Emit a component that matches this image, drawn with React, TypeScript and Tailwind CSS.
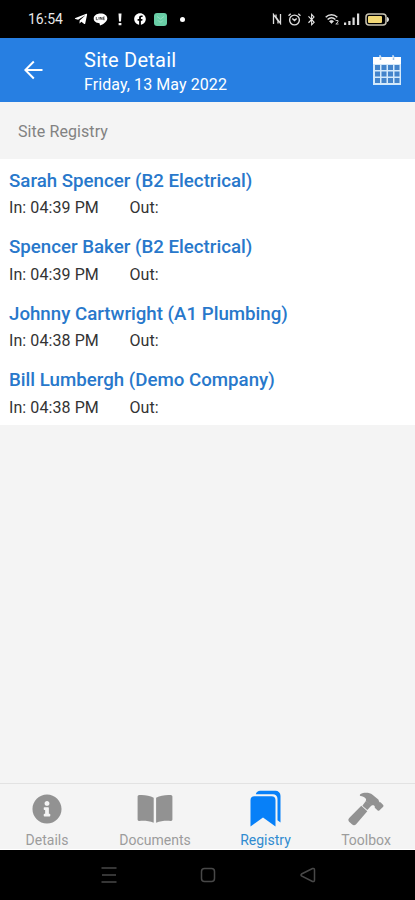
import React from 'react';
import { FaInfoCircle, FaTelegramPlane, FaFacebook, FaBluetoothB } from 'react-icons/fa';

const entries = [
  { name: 'Sarah Spencer (B2 Electrical)', in: '04:39 PM' },
  { name: 'Spencer Baker (B2 Electrical)', in: '04:39 PM' },
  { name: 'Johnny Cartwright (A1 Plumbing)', in: '04:38 PM' },
  { name: 'Bill Lumbergh (Demo Company)', in: '04:38 PM' },
];

const BookIcon = () => (
  <svg width="36" height="30" viewBox="0 0 36 30" fill="currentColor">
    <path d="M.6 2.6C.6 1.600 1.300 1.100 2.200 1 7.500.6 12.600 1.500 16.700 3.800V28.800C12 26.900 7 26.500 2.200 27 1.200 27.100.6 26.500.6 25.600Z" />
    <path d="M35.400 2.600C35.400 1.600 34.700 1.100 33.800 1 28.500.6 23.400 1.500 19.100 3.800V28.800C24 26.900 29 26.500 33.800 27 34.800 27.100 35.400 26.500 35.400 25.600Z" />
  </svg>
);

const BookmarksIcon = () => (
  <svg width="31" height="38" viewBox="0 0 31 38" fill="currentColor">
    <path d="M4.500 6.300H21.500A4 4 0 0 1 25.500 10.300V36.500L13 27.600.5 36.500V10.300A4 4 0 0 1 4.500 6.300Z" />
    <path d="M5.800 4.200C6.300 2 8 .8 10.200.8H25.500A5 5 0 0 1 30.500 5.800V32.500L27.500 30.300V8.700A4.500 4.500 0 0 0 23 4.200Z" />
  </svg>
);

const HammerIcon = () => (
  <svg width="36" height="34" viewBox="0 0 36 34" fill="currentColor">
    <path d="M12.300 2.200C16 .1 21.300.3 24.500 2.700L30.300 7.600C31 8.500 30.700 9.700 31.600 10.200L32.500 10.200 35.200 13C35.600 13.500 35.600 14.200 35.200 14.700L31.300 18.500C30.800 18.900 30.200 18.900 29.700 18.500L26.800 15.700C26.700 14.800 27 14.200 26.300 13.700 25.300 13 24.200 13.500 23.300 13.500L17.800 8.800C19 6.600 16.600 4.600 12.500 3.900 11.700 3.700 11.600 2.600 12.300 2.200Z" />
    <path d="M18 8.800 23.700 13.300 19.300 18.100 14.400 13.700Z" />
    <path d="M13.300 13.700 19.300 19.300 8.100 32.200C7 33.400 5.300 33.500 4.200 32.500L1.100 29.700C.1 28.700.1 27.200 1.200 26.100Z" />
  </svg>
);

const CalendarIcon = () => (
  <svg width="30" height="32" viewBox="0 0 30 32">
    <path d="M1 3H29V31H1Z" fill="#d3e9fb" />
    <path d="M1 3H29V10H1Z" fill="#fff" />
    <g fill="#4384cb">
      {[11, 17.5, 24].map((y) =>
        [3, 9.5, 16, 22.5].map((x) => <rect key={`${x}-${y}`} x={x} y={y} width="5" height="5" />)
      )}
    </g>
    <path d="M8.500 2V6M21.500 2V6" stroke="#9cbfe2" strokeWidth="1.500" />
    <path d="M8 1V4M21 1V4" stroke="#fff" strokeWidth="1" />
  </svg>
);

const tabs = [
  { label: 'Details', icon: <FaInfoCircle size={30} />, width: 'w-[94px]' },
  { label: 'Documents', icon: <BookIcon />, width: 'w-[122px]' },
  { label: 'Registry', icon: <BookmarksIcon />, width: 'w-[99px]', active: true },
  { label: 'Toolbox', icon: <HammerIcon />, width: 'w-[102px]' },
];

const StatusBar = () => (
  <div className="flex h-[38px] items-center bg-black pl-7 pr-[25px] text-[#e8e8e8]">
    <span className="w-[46px] whitespace-nowrap text-[14px] leading-5">16:54</span>
    <FaTelegramPlane size={14} className="text-white" />
    <svg width="15" height="13" viewBox="0 0 15 13" className="ml-[5px]">
      <path d="M7.500.5C3.500.5.7 2.700.7 5.500S3.300 10 6.500 10.300L7 12.500C10 11.500 14.300 8.500 14.300 5.500S11.500.5 7.500.5Z" fill="#fff" />
      <path d="M3.300 4V6.700H4.800M6 4V6.700M7.300 6.700V4L9 6.700V4M11.700 4H10.300V6.700H11.700M10.300 5.400H11.500" stroke="#222" strokeWidth=".7" fill="none" />
    </svg>
    <svg width="4" height="13" viewBox="0 0 4 13" className="ml-[10px]">
      <path d="M.5.500H3.500L3 8.500H1ZM.6 10H3.400V12.300H.6Z" fill="#f5f5f5" />
    </svg>
    <FaFacebook size={12} className="ml-3 text-white" />
    <div className="ml-2 flex h-[13px] w-[13px] items-center justify-center rounded-[3px] bg-[#68cda5]">
      <svg width="9" height="9" viewBox="0 0 9 9" fill="none" stroke="#a0e2c9" strokeWidth=".8">
        <path d="M1 1.500 4.500 4 8 1.500M2 5.500C3.500 7.500 5.500 7.500 7 5.500" />
      </svg>
    </div>
    <div className="ml-[13px] h-[5px] w-[5px] rounded-full bg-white" />
    <div className="ml-auto flex items-center">
      <svg width="10" height="12" viewBox="0 0 10 12" fill="none" stroke="#ddd" strokeWidth="1.300">
        <path d="M1.500 11V1.500L6 8V10.500M4 1.500V4L8.500 10.500V1" />
      </svg>
      <svg width="13" height="13" viewBox="0 0 12 12" fill="none" stroke="#ddd" strokeWidth="1.300" className="ml-[6px]">
        <circle cx="6" cy="6.500" r="4.500" />
        <path d="M.5 2.500 2.500.7M11.500 2.500 9.500.7M4 5 6 7 8 5" />
      </svg>
      <FaBluetoothB size={13} className="ml-1" />
      <svg width="15" height="12" viewBox="0 0 15 12" className="ml-[7px]" fill="none" stroke="#ddd">
        <path d="M.7 4.300C4 1 9 1 12.300 4.300M2.600 6.500C5 4.300 8 4.300 10.400 6.500" strokeWidth="1.500" />
        <path d="M4.300 8.300C5.800 7 7.200 7 8.700 8.300L6.500 10.500Z" fill="#ddd" strokeWidth=".5" />
        <path d="M10.500 7.500H13V9L10.800 11H13.500" strokeWidth=".9" />
      </svg>
      <svg width="16" height="12" viewBox="0 0 16 12" fill="#ddd" className="ml-[4px]">
        <path d="M0 9.500H2.200V12H0ZM4.300 8H6.500V12H4.300ZM8.500 4.500H10.700V12H8.500ZM13 .5H15.200V12H13Z" />
      </svg>
      <svg width="25" height="13" viewBox="0 0 25 13" className="ml-[5px]">
        <rect x="1" y="1" width="20" height="11" rx="3" fill="none" stroke="#c9c4b4" strokeWidth="1.500" />
        <rect x="3" y="3" width="14" height="7" rx="1" fill="#f3d976" />
        <path d="M22 4C24.700 4.500 24.700 8.500 22 9" fill="#ddd" />
      </svg>
    </div>
  </div>
);

const App = () => {
  return (
    <div className="flex h-[900px] w-full flex-col overflow-hidden bg-[#f4f4f4] font-['Roboto',sans-serif]">
      <StatusBar />
      <header className="flex h-16 items-center bg-[#277fe2] pl-6 pr-[13px] text-white">
        <svg width="19" height="20" viewBox="0 0 19 20" fill="none" stroke="currentColor" strokeWidth="2">
          <path d="M18.500 10H1.500M9.800 1.500 1.300 10 9.800 18.500" />
        </svg>
        <div className="ml-[41px] flex flex-col pt-1">
          <h1 className="text-[20px] leading-[25px] tracking-[0.25px]">Site Detail</h1>
          <p className="text-[16px] leading-[23px] tracking-[0.08px]">Friday, 13 May 2022</p>
        </div>
        <div className="ml-auto">
          <CalendarIcon />
        </div>
      </header>
      <div className="h-[57px] px-[18px] pt-5 text-[16px] leading-5 tracking-[0.08px] text-[#828282]">Site Registry</div>
      <main className="h-[266px] bg-white">
        {entries.map((entry) => (
          <div key={entry.name} className="h-[66.5px] px-[9px] pt-[9.5px]">
            <h2 className="whitespace-nowrap text-[18.7px] font-medium leading-6 text-[#2878cb]">{entry.name}</h2>
            <div className="flex pt-[4.5px] text-[16px] leading-[22px] tracking-[0.08px] text-[#333]">
              <span className="w-[120.5px]">In: {entry.in}</span>
              <span>Out:</span>
            </div>
          </div>
        ))}
      </main>
      <nav className="mt-auto flex h-[67px] shrink-0 border-b border-t border-b-[#fff] border-t-[#e2e2e2]">
        {tabs.map((tab) => (
          <div
            key={tab.label}
            className={`${tab.width} flex shrink-0 flex-col items-center ${tab.active ? 'text-[#0780f8]' : 'text-[#929292]'}`}
          >
            <div className="flex h-[47px] items-center justify-center pt-[3px]">{tab.icon}</div>
            <span className={`text-[14px] leading-[18px] ${tab.active ? 'text-[#308bd0]' : 'text-[#9c9c9c]'}`}>
              {tab.label}
            </span>
          </div>
        ))}
      </nav>
      <div className="flex h-[50px] shrink-0 items-center bg-black pl-[101px]">
        <svg width="16" height="16" viewBox="0 0 16 16" stroke="#484848" strokeWidth="1.500">
          <path d="M.5 1H15.500M1 8H15M.5 15H15.500" />
        </svg>
        <svg width="16" height="16" viewBox="0 0 16 16" fill="none" stroke="#484848" strokeWidth="1.500" className="ml-[83px]">
          <rect x="1.500" y="1.500" width="13" height="13" rx="3" />
        </svg>
        <svg width="16" height="16" viewBox="0 0 16 16" fill="none" stroke="#484848" strokeWidth="1.500" className="ml-[84px]">
          <path d="M1.500 7 12.500 1.500Q14.500 1 14.500 3V13Q14.500 15 12.500 14.500L1.500 9Q.5 8 1.500 7Z" />
        </svg>
      </div>
    </div>
  );
};

export default App;
